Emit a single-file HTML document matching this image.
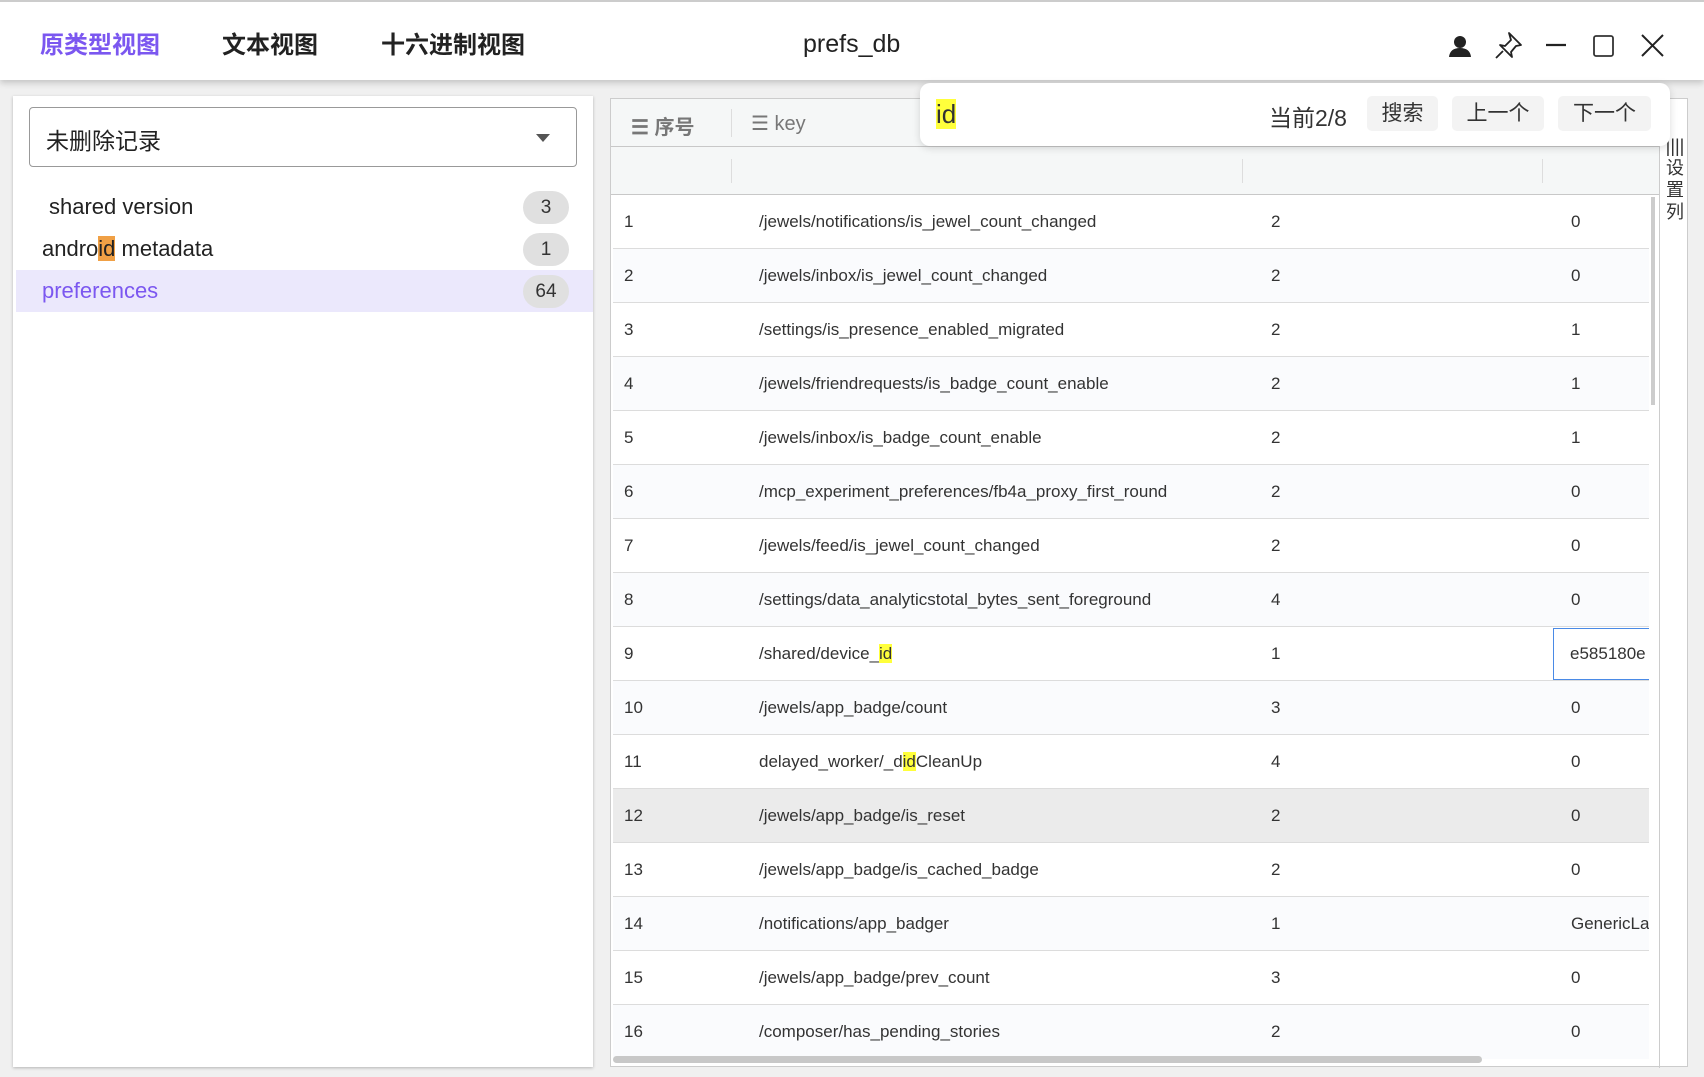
<!DOCTYPE html>
<html><head><meta charset="utf-8">
<style>
*{box-sizing:border-box;margin:0;padding:0}
body{width:1704px;height:1077px;overflow:hidden;background:#f0f0f0;font-family:"Liberation Sans","Noto Sans CJK SC",sans-serif;position:relative;color:#333}
.abs{position:absolute}
#hdr{left:0;top:0;width:1704px;height:80px;background:#fff;box-shadow:0 3px 6px rgba(0,0,0,.18);border-top:2px solid #ccc}
.tab{top:23px;font-size:24px;font-weight:bold;color:#222}
#left{left:13px;top:96px;width:580px;height:971px;background:#fff;box-shadow:0 1px 3px rgba(0,0,0,.25)}
#dd{left:16px;top:11px;width:548px;height:60px;border:1px solid #999;border-radius:4px;font-size:23px;padding:14px 0 0 16px;color:#222}
.it{left:3px;width:577px;height:42px;font-size:22px;line-height:42px;color:#222}
.bd{position:absolute;right:24px;top:5px;height:33px;min-width:46px;border-radius:17px;background:#e0e0e0;font-size:19px;line-height:33px;text-align:center;color:#333}
#right{left:610px;top:98px;width:1078px;height:969px;background:#fff;border:1px solid #ccc}
.th{left:0;width:1048px;background:#f5f7f7;border-bottom:1px solid #c8c8c8}
.row{left:2px;width:1036px;height:54px;border-bottom:1px solid #dcdcdc;font-size:17px;line-height:54px;color:#333}
.row span{position:absolute}
.hl{background:#ffff3b}
.btn{top:13px;height:35px;background:#f3f3f3;border-radius:5px;font-size:21px;line-height:35px;text-align:center;white-space:nowrap}
</style></head><body>
<div id="hdr" class="abs">
 <div class="abs tab" style="left:40px;color:#7b57f0">原类型视图</div>
 <div class="abs tab" style="left:222px">文本视图</div>
 <div class="abs tab" style="left:381px">十六进制视图</div>
 <div class="abs" style="left:803px;top:28px;font-size:25px;color:#222">prefs_db</div>
 <svg class="abs" style="left:1440px;top:20px" width="240" height="44" viewBox="1440 20 240 44">
  <circle cx="1460" cy="40" r="6" fill="#222"/><path d="M1449 55 Q1450 46 1460 46 Q1470 46 1471 55Z" fill="#222"/>
  <path d="M1509 31 L1521 43 L1516 44 L1511 50 L1512 55 L1500 43 L1505 44 L1511 38 Z M1503 49 L1496 56" fill="none" stroke="#222" stroke-width="1.8" stroke-linejoin="round"/>
  <path d="M1546 43 H1566" stroke="#222" stroke-width="2.2"/>
  <rect x="1594" y="34" width="19" height="20" rx="2" fill="none" stroke="#333" stroke-width="1.8"/>
  <path d="M1642 33 L1663 54 M1663 33 L1642 54" stroke="#222" stroke-width="2"/>
 </svg>
</div>
<div id="left" class="abs">
 <div id="dd" class="abs">未删除记录<svg class="abs" style="right:26px;top:26px" width="14" height="8"><path d="M0 0H14L7 8Z" fill="#555"/></svg></div>
 <div class="abs it" style="top:90px;padding-left:33px">shared version<span class="bd">3</span></div>
 <div class="abs it" style="top:132px;padding-left:26px">andro<span style="background:#f0a045">id</span> metadata<span class="bd">1</span></div>
 <div class="abs it" style="top:174px;padding-left:26px;background:#ebe8fc;color:#7b57f0">preferences<span class="bd">64</span></div>
</div>
<div id="right" class="abs">
 <div class="abs th" style="top:0;height:48px;font-size:20px;color:#777">
  <span class="abs" style="left:20px;top:12px;font-weight:bold">☰ 序号</span>
  <div class="abs" style="left:120px;top:10px;width:1px;height:28px;background:#ddd"></div>
  <span class="abs" style="left:140px;top:12px">☰ key</span>
 </div>
 <div class="abs th" style="top:48px;height:48px">
  <div class="abs" style="left:120px;top:12px;width:1px;height:24px;background:#ddd"></div>
  <div class="abs" style="left:631px;top:12px;width:1px;height:24px;background:#ddd"></div>
  <div class="abs" style="left:931px;top:12px;width:1px;height:24px;background:#ddd"></div>
 </div>
 <div class="abs" style="left:1048px;top:0;width:1px;height:969px;background:#ccc"></div>
 <div class="abs" style="left:1054px;top:36px;font-size:18px;line-height:22px;color:#333;width:20px;text-align:center">||||<br>设<br>置<br>列</div>
 <div class="abs" style="left:1040px;top:98px;width:4px;height:208px;background:#ccc"></div>
 <div id="rows"></div>
 <div class="abs" style="left:2px;top:957px;width:869px;height:7px;border-radius:4px;background:#c8c8c8"></div>
</div>
<div class="abs" style="left:920px;top:83px;width:750px;height:63px;background:#fff;border-radius:10px;box-shadow:0 2px 8px rgba(0,0,0,.15)">
 <span class="abs hl" style="left:16px;top:16px;font-size:26px;line-height:30px">id</span>
 <span class="abs" style="left:349px;top:16px;font-size:23px;color:#333;white-space:nowrap">当前2/8</span>
 <span class="abs btn" style="left:447px;width:71px">搜索</span>
 <span class="abs btn" style="left:532px;width:92px">上一个</span>
 <span class="abs btn" style="left:638px;width:93px">下一个</span>
</div>
<script>
var d=[["1","/jewels/notifications/is_jewel_count_changed","2","0"],["2","/jewels/inbox/is_jewel_count_changed","2","0"],["3","/settings/is_presence_enabled_migrated","2","1"],["4","/jewels/friendrequests/is_badge_count_enable","2","1"],["5","/jewels/inbox/is_badge_count_enable","2","1"],["6","/mcp_experiment_preferences/fb4a_proxy_first_round","2","0"],["7","/jewels/feed/is_jewel_count_changed","2","0"],["8","/settings/data_analyticstotal_bytes_sent_foreground","4","0"],["9","/shared/device_<b class='hl' style='font-weight:normal'>id</b>","1","e585180e"],["10","/jewels/app_badge/count","3","0"],["11","delayed_worker/_d<b class='hl' style='font-weight:normal'>id</b>CleanUp","4","0"],["12","/jewels/app_badge/is_reset","2","0"],["13","/jewels/app_badge/is_cached_badge","2","0"],["14","/notifications/app_badger","1","GenericLa"],["15","/jewels/app_badge/prev_count","3","0"],["16","/composer/has_pending_stories","2","0"]];
var h="";d.forEach(function(r,i){var bg=i==11?"#ebebeb":(i%2?"#fafbfd":"#fff");
h+='<div class="abs row" style="top:'+(96+i*54)+'px;background:'+bg+';overflow:hidden'+(i==15?';border-bottom:none':'')+'"><span style="left:11px">'+r[0]+'</span><span style="left:146px">'+r[1]+'</span><span style="left:658px">'+r[2]+'</span>'+(i==8?'<span style="left:940px;top:1px;width:100px;height:52px;border:1px solid #4a8ae6;line-height:50px;padding-left:16px">'+r[3]+'</span>':'<span style="left:958px">'+r[3]+'</span>')+'</div>';});
document.getElementById("rows").innerHTML=h;
</script>
</body></html>
